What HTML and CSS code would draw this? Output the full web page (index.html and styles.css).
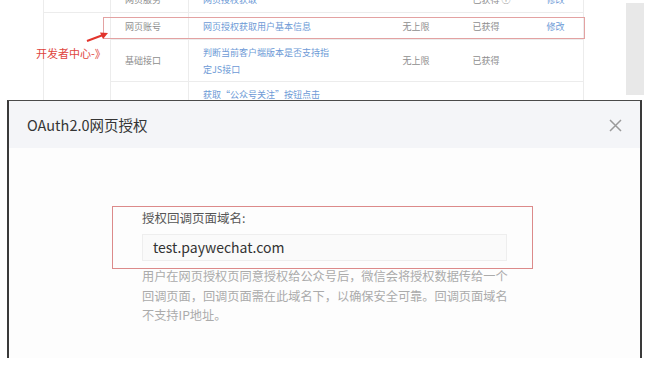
FILE: index.html
```html
<!DOCTYPE html>
<html lang="zh-CN">

<head>
    <meta charset="UTF-8">
    <title>OAuth2.0网页授权</title>
    <link rel="stylesheet" href="styles.css">
</head>

<body>
    <!-- Screenshot of the developer center table -->
    <div class="shot">
        <table class="api-table">
            <colgroup>
                <col class="col-group">
                <col class="col-name">
                <col class="col-desc">
                <col class="col-limit">
                <col class="col-state">
                <col class="col-op">
            </colgroup>
            <tr class="row-short">
                <td class="group"></td>
                <td class="name">网页服务</td>
                <td class="link">网页授权获取</td>
                <td></td>
                <td>已获得 ⓘ</td>
                <td class="link last">修改</td>
            </tr>
            <tr class="row-short">
                <td class="group" rowspan="3"></td>
                <td class="name">网页账号</td>
                <td class="link">网页授权获取用户基本信息</td>
                <td>无上限</td>
                <td>已获得</td>
                <td class="link last">修改</td>
            </tr>
            <tr class="row-tall">
                <td class="name">基础接口</td>
                <td class="link">判断当前客户端版本是否支持指<br>定JS接口</td>
                <td>无上限</td>
                <td>已获得</td>
                <td class="last"></td>
            </tr>
            <tr class="row-tall">
                <td class="name"></td>
                <td class="link">获取“公众号关注”按钮点击<br>状态</td>
                <td></td>
                <td></td>
                <td class="last"></td>
            </tr>
        </table>
        <div class="scrollbar"></div>

        <!-- red annotations over the screenshot -->
        <div class="mark-row"></div>
        <div class="mark-label">开发者中心-》</div>
        <svg class="mark-arrow" width="24" height="12" viewBox="0 0 24 12">
            <line x1="1" y1="10" x2="17" y2="4" stroke="#e2342c" stroke-width="2" />
            <polygon points="22,2 14,1.5 17,8" fill="#e2342c" />
        </svg>
    </div>

    <!-- Dialog -->
    <div class="dialog">
        <div class="dialog-head">
            <h3 class="dialog-title">OAuth2.0网页授权</h3>
            <svg class="dialog-close" width="13" height="13" viewBox="0 0 13 13">
                <path d="M1 1 L12 12 M12 1 L1 12" stroke="#9a9a9a" stroke-width="1.5" fill="none" />
            </svg>
        </div>
        <div class="dialog-body">
            <div class="field">
                <label class="field-label">授权回调页面域名:</label>
                <div class="field-input">test.paywechat.com</div>
            </div>
            <p class="field-tip">用户在网页授权页同意授权给公众号后，微信会将授权数据传给一个<br>回调页面，回调页面需在此域名下，以确保安全可靠。回调页面域名<br>不支持IP地址。</p>
        </div>
    </div>
</body>

</html>
```

FILE: styles.css
```css
body {
    margin: 0;
    background-color: #ffffff;
    font-family: "Noto Sans CJK SC", "Noto Sans", sans-serif;
}

/* Top screenshot */
.shot {
    position: relative;
    display: flex;
    align-items: flex-start;
    height: 100px;
    overflow: hidden;
}

.api-table {
    margin: -14px 0 0 43px;
    border-collapse: collapse;
    table-layout: fixed;
    width: 540px;
    font-size: 9px;
    color: #8e8e8e;
}

.col-group { width: 67px; }
.col-name { width: 78px; }
.col-desc { width: 200px; }
.col-limit { width: 70px; }
.col-state { width: 74px; }
.col-op { width: 51px; }

.api-table td {
    padding: 0 0 0 14px;
    border-bottom: 1px solid #ececec;
    line-height: 17px;
    white-space: nowrap;
    overflow: hidden;
}

.api-table .group {
    border-left: 1px solid #ececec;
    border-right: 1px solid #ececec;
}

.api-table td.group[rowspan] {
    border-bottom: none;
}

.api-table .name,
.api-table .last {
    border-right: 1px solid #ececec;
}

.row-short td {
    height: 26px;
}

.row-tall td {
    height: 41px;
}

.link {
    color: #6d9ad6;
}

.scrollbar {
    margin: 3px 0 0 42px;
    width: 18px;
    height: 92px;
    background-color: #e8e8e8;
}

.mark-row {
    position: absolute;
    left: 103px;
    top: 17px;
    width: 480px;
    height: 20px;
    border: 1px solid #e3a2a2;
}

.mark-label {
    position: absolute;
    left: 36px;
    top: 46px;
    font-size: 11px;
    line-height: 15px;
    color: #e0453d;
}

.mark-arrow {
    position: absolute;
    left: 86px;
    top: 31px;
}

/* Dialog */
.dialog {
    margin-left: 7px;
    width: 631px;
    height: 257px;
    border-top: 1px solid #4a4a4a;
    border-left: 2px solid #3a3a3a;
    border-right: 2px solid #3a3a3a;
    background-color: #fdfdfd;
}

.dialog-head {
    display: flex;
    align-items: center;
    justify-content: space-between;
    height: 47px;
    padding: 0 18px 0 18px;
    background-color: #f4f5f8;
}

.dialog-title {
    margin: 0;
    font-size: 14.5px;
    font-weight: normal;
    color: #353535;
}

.dialog-close {
    margin-top: 1px;
}

.dialog-body {
    padding: 58px 0 0 103px;
}

.field {
    width: 365px;
    padding: 2px 25px 7px 29px;
    border: 1px solid #dc8a8a;
}

.field-label {
    display: block;
    font-size: 12.5px;
    line-height: 18px;
    color: #555555;
}

.field-input {
    margin-top: 7px;
    height: 25px;
    padding-left: 10px;
    border: 1px solid #eeeeee;
    background-color: #fafafa;
    font-size: 14px;
    line-height: 25px;
    color: #333333;
}

.field-tip {
    margin: -2px 0 0 30px;
    font-size: 12.2px;
    line-height: 19.5px;
    color: #ababab;
    white-space: nowrap;
}
```
